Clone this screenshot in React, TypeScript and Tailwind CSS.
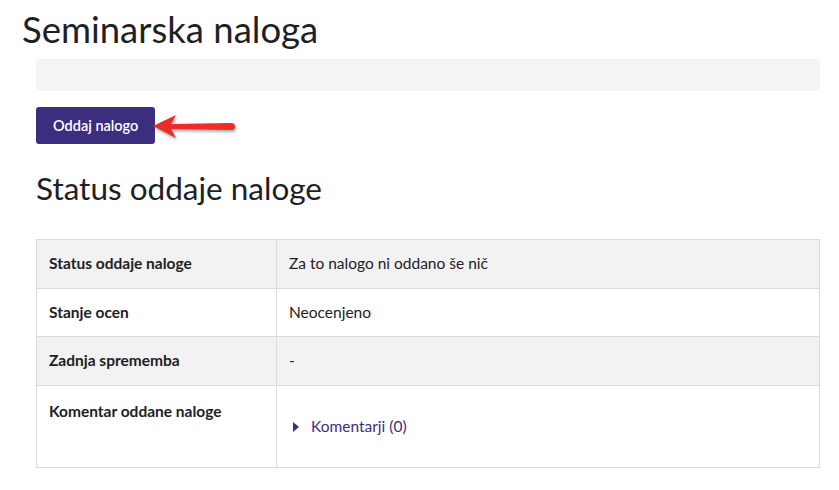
export default function App() {
  return (
    <div className="min-h-screen bg-white text-[#1d2125] font-['Lato','Liberation_Sans',sans-serif]">
      <div className="pl-[22px] pr-[19px] pt-[7px]">
        <h1 className="text-[36.5px] leading-[45px] font-normal">Seminarska naloga</h1>
        <div className="pl-[14px]">
          <div className="mt-[7px] h-[32px] rounded-[5px] bg-[#f4f4f4]"></div>
          <div className="mt-[16px] flex items-center">
            <button className="h-[37px] px-[17px] rounded-[3px] bg-[#3b2e7e] text-white text-[14.5px] font-semibold">
              Oddaj nalogo
            </button>
            <svg width="90" height="30" viewBox="0 0 90 30" className="-ml-[4px] drop-shadow-[1px_2px_1.5px_rgba(0,0,0,0.35)]">
              <path d="M2 15 L25 4 L20 13 L80 12 Q84 12 84 15.5 Q84 19 80 19 L20 18 L25 27 Z" fill="#ee2a2a" />
            </svg>
          </div>
          <h2 className="mt-[24px] text-[31.5px] leading-[40px] font-normal">Status oddaje naloge</h2>
          <table className="mt-[31px] w-full border-collapse text-[15.5px]">
            <tbody>
              <tr className="bg-[#f2f2f2] h-[49px]">
                <th className="w-[240px] border border-[#dcdcdc] px-[12px] text-left font-bold align-middle">Status oddaje naloge</th>
                <td className="border border-[#dcdcdc] px-[12px]">Za to nalogo ni oddano še nič</td>
              </tr>
              <tr className="h-[48px]">
                <th className="border border-[#dcdcdc] px-[12px] text-left font-bold">Stanje ocen</th>
                <td className="border border-[#dcdcdc] px-[12px]">Neocenjeno</td>
              </tr>
              <tr className="bg-[#f2f2f2] h-[49px]">
                <th className="border border-[#dcdcdc] px-[12px] text-left font-bold">Zadnja sprememba</th>
                <td className="border border-[#dcdcdc] px-[12px]">-</td>
              </tr>
              <tr className="h-[82px]">
                <th className="border border-[#dcdcdc] px-[12px] pt-[14px] text-left font-bold align-top">Komentar oddane naloge</th>
                <td className="border border-[#dcdcdc] px-[12px] align-middle">
                  <a className="flex items-center gap-[12px] pl-[4px] text-[#3b2e7e]">
                    <svg width="6" height="10" viewBox="0 0 6 10">
                      <path d="M0 0 L6 5 L0 10 Z" fill="#3b2e7e" />
                    </svg>
                    Komentarji (0)
                  </a>
                </td>
              </tr>
            </tbody>
          </table>
        </div>
      </div>
    </div>
  );
}
